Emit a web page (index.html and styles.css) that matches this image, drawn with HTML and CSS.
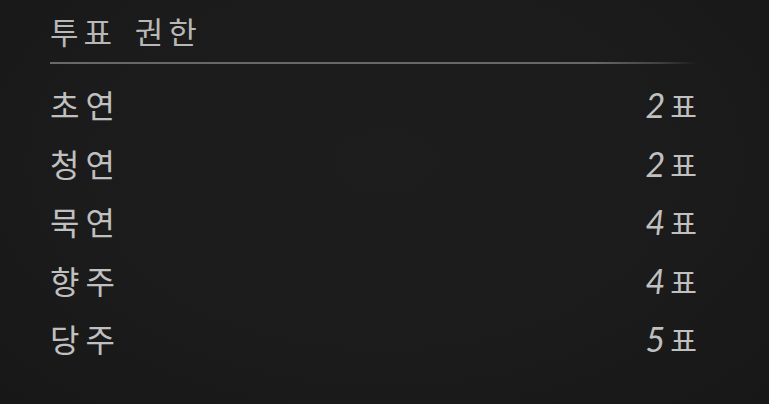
FILE: index.html
```html
<!DOCTYPE html>
<html lang="ko">
<head>
	<meta charset="UTF-8">
	<title>투표 권한</title>
	<link rel="stylesheet" href="styles.css">
</head>
<body>
	<section class="vote-panel" aria-label="투표 권한">
		<h2 class="vote-title">투표 권한</h2>
		<hr class="vote-rule">
		<ul class="vote-list">
			<li class="vote-row">
				<span class="vote-rank">초연</span>
				<span class="vote-count"><span class="num">2</span>표</span>
			</li>
			<li class="vote-row">
				<span class="vote-rank">청연</span>
				<span class="vote-count"><span class="num">2</span>표</span>
			</li>
			<li class="vote-row">
				<span class="vote-rank">묵연</span>
				<span class="vote-count"><span class="num">4</span>표</span>
			</li>
			<li class="vote-row">
				<span class="vote-rank">향주</span>
				<span class="vote-count"><span class="num">4</span>표</span>
			</li>
			<li class="vote-row">
				<span class="vote-rank">당주</span>
				<span class="vote-count"><span class="num">5</span>표</span>
			</li>
		</ul>
	</section>
</body>
</html>
```

FILE: styles.css
```css
/* Base */
:root {
	--color-bg: #1b1b1b;
	--color-text: #c0c0c0;
	--color-title: #b8b8b8;
	--color-rule: #686868;
	--font-kr: "Noto Sans CJK KR", "Noto Sans", sans-serif;
	--font-num: Lato, "Open Sans", sans-serif;
}

html,
body {
	margin: 0;
	height: 100%;
}

body {
	background: radial-gradient(ellipse at 50% 40%, #1d1d1d 0%, #1b1b1b 60%, #171717 100%);
	color: var(--color-text);
	font-family: var(--font-kr);
	font-weight: 400;
}

/* Panel */
.vote-panel {
	padding: 11px 72px 0 50px;
}

.vote-title {
	margin: 0;
	font-size: 31px;
	font-weight: 400;
	line-height: 40px;
	letter-spacing: 5px;
	word-spacing: 4px;
	color: var(--color-title);
}

.vote-rule {
	margin: 11px 0 0;
	height: 2px;
	border: 0;
	background: linear-gradient(90deg, var(--color-rule) 0%, var(--color-rule) 84%, rgba(104, 104, 104, 0.5) 94%, transparent 100%);
}

/* Rows */
.vote-list {
	list-style: none;
	margin: 11px 0 0;
	padding: 0;
}

.vote-row {
	display: flex;
	justify-content: space-between;
	align-items: baseline;
	height: 58.5px;
	line-height: 58.5px;
}

.vote-rank {
	font-size: 32px;
	letter-spacing: 6px;
}

.vote-count {
	font-size: 29px;
}

.vote-count .num {
	font-family: var(--font-num);
	font-style: italic;
	font-size: 34px;
	margin-right: 5px;
}
```
